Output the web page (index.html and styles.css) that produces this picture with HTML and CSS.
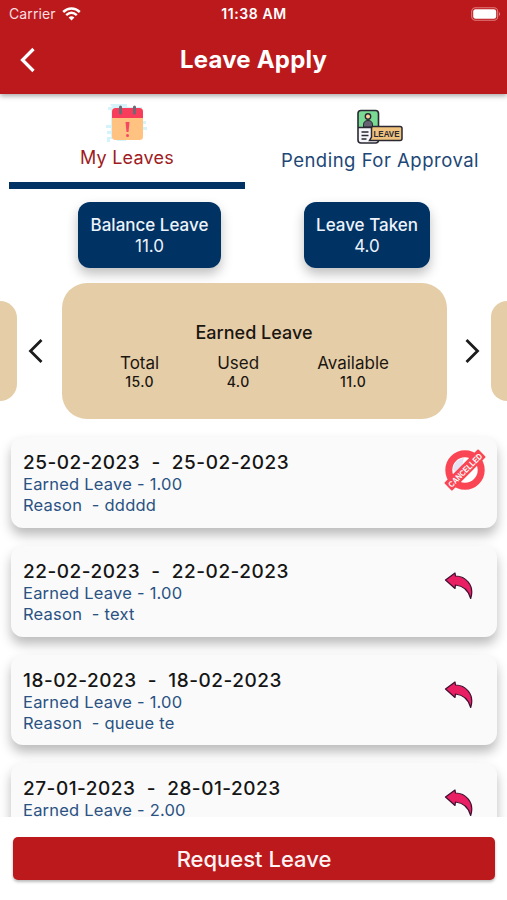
FILE: index.html
```html
<!DOCTYPE html>
<html lang="en">
  <head>
    <meta charset="UTF-8" />
    <title>Leave Apply</title>
    <link rel="stylesheet" href="styles.css">
  </head>
  <body>
    <svg class="symbols" width="0" height="0">
      <symbol id="undo" viewBox="0 0 30 28">
        <path d="M1.500 8 L11 1 L11.500 4 C21 4 31 13 26.700 26.500 C25 20 20 14 11.500 13 L11 16.500 Z" fill="#e91e63" stroke="#3b1030" stroke-width="1.200" stroke-linejoin="round" />
      </symbol>
    </svg>
    <div id="app">
      <header>
        <div class="status">
          <div class="carrier">
            <span>Carrier</span>
            <svg width="19" height="14" viewBox="0 0 19 14">
              <g fill="none" stroke="#fff" stroke-width="2.500">
                <path d="M1.200 5 C6 0.200 13 0.200 17.800 5" />
                <path d="M4.200 8.200 C7.500 5.200 11.500 5.200 14.800 8.200" />
              </g>
              <path d="M6.600 10.400 Q9.500 8 12.400 10.400 L9.500 13.500 Z" fill="#fff" />
            </svg>
          </div>
          <span class="clock">11:38 AM</span>
          <div class="battery">
            <svg width="30" height="14" viewBox="0 0 30 14">
              <rect x="0.700" y="0.700" width="26" height="12.600" rx="3.800" fill="none" stroke="#df7d7e" stroke-width="1.100" />
              <rect x="2.200" y="2.200" width="23" height="9.600" rx="2.400" fill="#fff" />
              <path d="M28 5 Q30.300 7 28 9 Z" fill="#df7d7e" />
            </svg>
          </div>
        </div>
        <div class="titlebar">
          <svg class="back" width="16" height="26" viewBox="0 0 16 26">
            <path d="M13.500 2 L2.500 13 L13.500 24" fill="none" stroke="#fff" stroke-width="3.200" />
          </svg>
          <h1>Leave Apply</h1>
        </div>
      </header>

      <nav class="tabs">
        <div class="tab active">
          <svg width="42" height="40" viewBox="0 0 42 40">
            <path d="M4 1h17v3h15v5h-4v9h8v3h-3v3h4v3h-5v4h-6v5h-10v2h-9v-2h-7v3H1v-5h4v-3H1v-3h4v-3H0v-3h5V7H2V4h4z" fill="#d4f3fa" />
            <rect x="6" y="5" width="31" height="32" rx="3.500" fill="#ffc281" />
            <path d="M6 15V9q0-4 4-4h23q4 0 4 4v6z" fill="#f83c5c" />
            <path d="M14.500 4v6M28.500 4v6" stroke="#6c6874" stroke-width="3" stroke-linecap="round" />
            <path d="M19.500 19h4l-1 10h-2z" fill="#f54863" />
            <circle cx="21.500" cy="32.500" r="1.500" fill="#f54863" />
          </svg>
          <span>My Leaves</span>
        </div>
        <div class="tab pending">
          <svg width="46" height="36" viewBox="0 0 46 36">
            <rect x="1" y="1.500" width="20.500" height="32.500" rx="3" fill="#f7f7fb" />
            <path d="M1 18.500V4.500q0-3 3-3h14.500q3 0 3 3v14z" fill="#79da94" />
            <path d="M6.500 18v-2q0-4.500 4.500-4.500t4.500 4.500v2z" fill="#676174" stroke="#292833" />
            <circle cx="11" cy="7.500" r="2.700" fill="#ffd39a" stroke="#292833" stroke-width="1.400" />
            <rect x="1" y="1.500" width="20.500" height="32.500" rx="3" fill="none" stroke="#292833" stroke-width="1.600" />
            <path d="M1 18.500h14M4.500 23h7M4.500 26.500h7M4.500 30h5" stroke="#292833" stroke-width="1.300" />
            <path d="M16 17.500h27q2 0 2 2v10q0 2-2 2H12.500L14.500 28v-8.500q0-2 1.500-2z" fill="#efc37d" stroke="#292833" stroke-width="1.500" />
            <text class="leave_label" x="29.500" y="28" textLength="26" lengthAdjust="spacingAndGlyphs">LEAVE</text>
          </svg>
          <span>Pending For Approval</span>
        </div>
      </nav>

      <section class="summary">
        <div class="stat balance"><b>Balance Leave</b><span>11.0</span></div>
        <div class="stat taken"><b>Leave Taken</b><span>4.0</span></div>
      </section>

      <section class="carousel">
        <div class="peek left"></div>
        <svg class="arrow" width="16" height="26" viewBox="0 0 16 26">
          <path d="M13.500 2 L2.500 13 L13.500 24" fill="none" stroke="#1c1c1c" stroke-width="2.800" />
        </svg>
        <div class="type">
          <h2>Earned Leave</h2>
          <dl>
            <div><dt>Total</dt><dd>15.0</dd></div>
            <div><dt>Used</dt><dd>4.0</dd></div>
            <div><dt>Available</dt><dd>11.0</dd></div>
          </dl>
        </div>
        <svg class="arrow" width="16" height="26" viewBox="0 0 16 26">
          <path d="M2.500 2 L13.500 13 L2.500 24" fill="none" stroke="#1c1c1c" stroke-width="2.800" />
        </svg>
        <div class="peek right"></div>
      </section>

      <main>
        <article class="leave">
          <div>
            <h3>25-02-2023  -  25-02-2023</h3>
            <p class="kind">Earned Leave - 1.00</p>
            <p class="reason">Reason  - ddddd</p>
          </div>
          <svg class="cancelled" width="42" height="42" viewBox="0 0 42 42">
            <circle cx="21" cy="21" r="16.200" fill="#fff" stroke="#fa4654" stroke-width="7" />
            <path d="M9 20A12.500 12.500 0 0 1 20 9L18 17L11 23Z" fill="#e4e3f4" />
            <g transform="rotate(-45 21 21)">
              <rect x="-3" y="15.500" width="48" height="11" rx="1" fill="#fa4654" />
              <text class="cancelled_label" x="21" y="24.300" textLength="44" lengthAdjust="spacingAndGlyphs">CANCELLED</text>
            </g>
          </svg>
        </article>
        <article class="leave">
          <div>
            <h3>22-02-2023  -  22-02-2023</h3>
            <p class="kind">Earned Leave - 1.00</p>
            <p class="reason">Reason  - text</p>
          </div>
          <svg class="undo" width="30" height="28"><use href="#undo" /></svg>
        </article>
        <article class="leave">
          <div>
            <h3>18-02-2023  -  18-02-2023</h3>
            <p class="kind">Earned Leave - 1.00</p>
            <p class="reason">Reason  - queue te</p>
          </div>
          <svg class="undo" width="30" height="28"><use href="#undo" /></svg>
        </article>
        <article class="leave">
          <div>
            <h3>27-01-2023  -  28-01-2023</h3>
            <p class="kind">Earned Leave - 2.00</p>
          </div>
          <svg class="undo" width="30" height="28"><use href="#undo" /></svg>
        </article>
      </main>

      <footer>
        <button>Request Leave</button>
      </footer>
    </div>
  </body>
</html>
```

FILE: styles.css
```css
* { box-sizing: border-box; }
body {
    margin: 0;
    background: #fff;
    font-family: Inter, "Liberation Sans", sans-serif;
}
h1, h2, h3, p, dl, dd { margin: 0; }
.symbols { display: block; }
#app {
    display: flex;
    flex-direction: column;
    width: 507px;
    height: 900px;
    overflow: hidden;
}

header {
    flex: none;
    height: 94px;
    background: #bc191c;
    color: #fff;
    box-shadow: 0 2px 5px rgba(0, 0, 0, 0.35);
}
.status {
    display: grid;
    grid-template-columns: 1fr auto 1fr;
    align-items: center;
    height: 27px;
    padding: 0 6px 0 9px;
    font-size: 14px;
}
.carrier {
    display: flex;
    align-items: center;
    gap: 6px;
    color: #f9dfe0;
    letter-spacing: 0.1px;
}
.clock {
    margin-right: 2px;
    font-weight: 600;
    font-size: 14px;
    letter-spacing: 0.6px;
}
.battery { display: flex; justify-content: flex-end; }
.titlebar {
    display: grid;
    grid-template-columns: 60px 1fr 60px;
    align-items: center;
    height: 65px;
}
.back { margin-left: 20px; }
h1 {
    font-size: 24px;
    font-weight: 700;
    letter-spacing: 0.2px;
    text-align: center;
}

.tabs {
    display: grid;
    grid-template-columns: 236px 236px;
    justify-content: space-between;
    flex: none;
    height: 95px;
    padding: 0 9px;
}
.tab {
    display: flex;
    flex-direction: column;
    align-items: center;
    padding-top: 15px;
    color: #1d4776;
    font-size: 18px;
    line-height: 22px;
    letter-spacing: 0.25px;
    white-space: nowrap;
}
.tab span { margin-top: 4px; }
.tab.pending {
    font-size: 18.5px;
    letter-spacing: 0.5px;
}
.tab.active {
    padding-top: 9px;
    border-bottom: 7px solid #003263;
    color: #a01b22;
}
.leave_label {
    font: bold 9px "Liberation Sans", sans-serif;
    letter-spacing: 0;
    fill: #292833;
    text-anchor: middle;
}

.summary {
    display: flex;
    flex: none;
    gap: 83px;
    height: 94px;
    padding: 13px 0 0 78px;
}
.stat {
    display: flex;
    flex-direction: column;
    align-items: center;
    height: 66px;
    padding-top: 13px;
    border-radius: 12px;
    background: #003263;
    color: #edf3fb;
    font-size: 17px;
    line-height: 21px;
    box-shadow: 0 6px 12px rgba(0, 0, 0, 0.25);
}
.stat b { font-weight: 500; }
.balance { width: 143px; }
.taken { width: 126px; }

.carousel {
    display: flex;
    align-items: center;
    justify-content: space-between;
    flex: none;
    height: 136px;
}
.peek { width: 17px; height: 100px; background: #e5cda8; }
.peek.left { margin-right: -7px; border-radius: 0 20px 20px 0; }
.peek.right { width: 16px; margin-left: -7px; border-radius: 20px 0 0 20px; }
.type {
    width: 385px;
    height: 136px;
    padding-top: 39px;
    border-radius: 25px;
    background: #e5cda8;
    color: #1b1610;
    text-align: center;
}
h2 {
    font-size: 18px;
    line-height: 22px;
    font-weight: 500;
}
dl {
    display: flex;
    justify-content: center;
    gap: 58px;
    margin-top: 9px;
    padding-left: 1px;
}
dt { font-size: 17px; line-height: 20px; }
dd {
    font-size: 14px;
    line-height: 18px;
    font-weight: 500;
    letter-spacing: 0.4px;
}

main {
    display: flex;
    flex-direction: column;
    flex: none;
    gap: 18px;
    height: 398px;
    padding: 18px 10px 0 11px;
    overflow: hidden;
}
.leave {
    display: flex;
    justify-content: space-between;
    flex: none;
    height: 90.8px;
    padding: 14px 11px 0 12px;
    border-radius: 12px;
    background: #fafafa;
    box-shadow: 0 7px 12px rgba(0, 0, 0, 0.27);
}
h3 {
    color: #151515;
    font-size: 19px;
    line-height: 23px;
    font-weight: 500;
    letter-spacing: 0.52px;
    white-space: pre;
}
.leave p {
    color: #2a5283;
    font-size: 16.5px;
    line-height: 21px;
    letter-spacing: 0.22px;
    white-space: pre;
}
.undo { margin: 12px 12px 0 0; }
.cancelled { margin-top: -2px; overflow: visible; }
.cancelled_label {
    font: bold 8.500px "Liberation Sans", sans-serif;
    fill: #fff;
    text-anchor: middle;
}

footer {
    flex: 1;
    padding: 20px 12px 0 13px;
    background: #fff;
}
button {
    display: block;
    width: 100%;
    height: 43px;
    border: 0;
    border-radius: 5px;
    background: #bc191c;
    color: #fff4f4;
    font: 550 22px Inter, sans-serif;
    box-shadow: 0 2px 3px rgba(0, 0, 0, 0.27);
}
```
